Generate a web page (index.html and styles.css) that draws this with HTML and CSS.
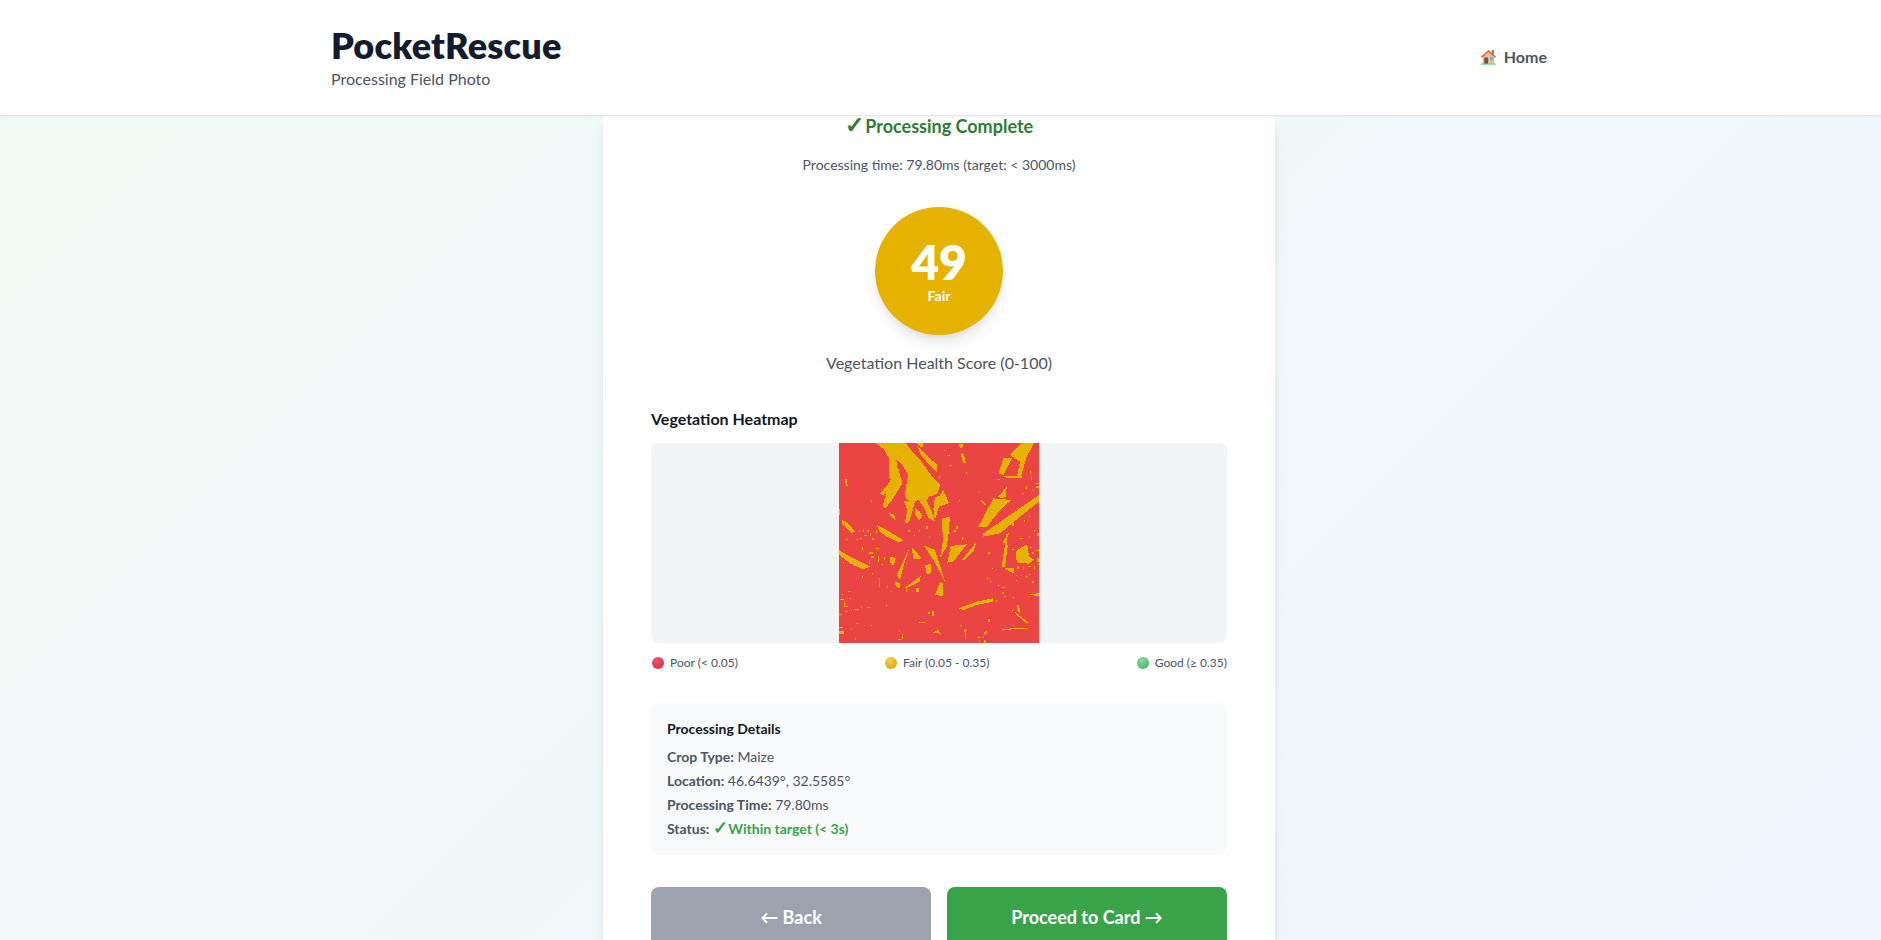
FILE: index.html
```html
<!DOCTYPE html>
<html lang="en">
<head>
<meta charset="utf-8">
<title>PocketRescue</title>
<link rel="stylesheet" href="styles.css">
</head>
<body>
<header class="site-header">
  <div class="header-inner">
    <div class="brand">
      <h1 class="brand-title">PocketRescue</h1>
      <p class="brand-sub">Processing Field Photo</p>
    </div>
    <a class="home-link" href="#">
      <svg class="home-icon" viewBox="0 0 16 16" aria-hidden="true">
        <rect x="11" y="2" width="2" height="4" fill="#a5633a"/>
        <path d="M2.5 7.5 8 3l5.5 4.5V15h-11z" fill="#e8c08e"/>
        <path d="M0.8 8.3 8 1.8l7.2 6.5-1 .9L8 3.8 1.8 9.2z" fill="#e2603a"/>
        <rect x="4" y="9" width="3.6" height="6" fill="#7a5240"/>
        <rect x="9.4" y="8.6" width="3" height="3" fill="#58b4ee"/>
        <rect x="0.8" y="14.6" width="14.4" height="1.1" fill="#5fdc6c"/>
      </svg>
      <span>Home</span>
    </a>
  </div>
</header>
<main class="page">
  <section class="card">
    <h2 class="done-title"><span class="tick">✓</span> Processing Complete</h2>
    <p class="done-time">Processing time: 79.80ms (target: &lt; 3000ms)</p>
    <div class="score-wrap">
      <div class="score-circle">
        <span class="score-value">49</span>
        <span class="score-label">Fair</span>
      </div>
    </div>
    <p class="score-caption">Vegetation Health Score (0-100)</p>
    <h3 class="map-title">Vegetation Heatmap</h3>
    <div class="map-frame">
      <svg class="map" viewBox="0 0 600 600" shape-rendering="crispEdges" aria-label="Vegetation heatmap">
        <rect width="600" height="600" fill="#ea4543"/>
        <g fill="#e6b200">
          <!-- upper left: the broad leaf and its fingers -->
          <polygon points="110,0 201,0 223,31 245,53 278,99 303,126 296,150 282,158 270,160 262,172 235,172 218,178 205,170 197,160 203,120 207,96 190,65 172,50 177,85 167,100 172,115 150,105 150,70 150,45 135,20"/>
          <polygon points="195,175 228,175 220,205 208,240 197,240 205,200"/>
          <polygon points="240,172 262,172 282,215 288,235 268,225 255,195"/>
          <polygon points="228,195 242,205 250,222 240,232 228,215"/>
          <polygon points="230,0 252,0 250,15"/>
          <polygon points="235,10 260,35 295,65 295,90 270,65 245,35"/>
          <polygon points="123,151 153,116 158,126 133,156"/>
          <polygon points="148,121 178,76 190,121 165,163 138,198 131,191"/>
          <polygon points="150,210 165,215 170,230 155,220"/>
          <polygon points="18,108 24,108 26,130 21,130"/>
          <polygon points="0,198 3,198 3,215 0,215"/>
          <polygon points="8,231 28,241 48,266 38,271 8,241"/>
          <polygon points="113,246 143,261 193,291 183,299 143,281 123,266"/>
          <polygon points="283,199 288,161 300,160 313,141 330,181 300,190 288,231"/>
          <!-- upper right -->
          <polygon points="513,36 548,0 586,0 563,41 546,101 535,96 543,56 520,41"/>
          <polygon points="478,91 493,46 518,46 493,96"/>
          <polygon points="495,100 550,100 550,106 505,106"/>
          <polygon points="360,5 372,0 370,15 362,15"/>
          <polygon points="365,30 375,35 380,60 372,60"/>
          <polygon points="478,161 503,131 501,161 488,166"/>
          <polygon points="418,251 463,166 518,171 493,191 463,226 443,253"/>
          <polygon points="433,271 513,216 600,156 600,176 543,221 483,271 433,281"/>
          <polygon points="505,275 510,270 500,300 490,300"/>
          <polygon points="308,226 333,221 328,280 323,311 303,346 312,290"/>
          <polygon points="425,170 440,185 438,188 425,175"/>
          <!-- lower left -->
          <polygon points="0,321 33,341 93,371 73,379 33,361 0,336"/>
          <polygon points="173,396 213,311 193,371 183,411"/>
          <polygon points="218,311 248,346 223,349"/>
          <polygon points="253,306 288,321 318,416 283,351"/>
          <polygon points="258,366 276,363 276,391 263,393"/>
          <polygon points="195,436 245,399 243,416 213,431"/>
          <polygon points="288,456 303,416 311,421 313,459"/>
          <polygon points="168,415 182,420 182,435 170,430"/>
          <polygon points="152,340 170,345 165,365 155,365"/>
          <!-- lower right -->
          <polygon points="335,309 383,304 343,356 325,359"/>
          <polygon points="368,351 413,296 403,326 378,351"/>
          <polygon points="488,371 503,271 506,311 498,371"/>
          <polygon points="530,325 548,312 565,305 570,340 585,350 570,362 540,360 530,350"/>
          <polygon points="495,375 525,375 525,390 510,385"/>
          <polygon points="358,496 413,476 463,466 463,476 413,486 373,501"/>
          <polygon points="570,455 600,450 600,460"/>
          <polygon points="535,485 540,485 545,515 535,505"/>
          <polygon points="525,505 570,540 565,543 532,515"/>
          <polygon points="478,563 495,557 568,555 568,558 500,560"/>
          <polygon points="375,558 383,560 380,590"/>
          <polygon points="432,570 447,562 440,575"/>
          <polygon points="280,570 298,560 305,572"/>
        </g>
        <path class="map-specks" d="M60 262h4v4h-4zM72 258h4v8h-4zM85 262h4v4h-4zM92 270h4v8h-4zM76 276h8v4h-8zM64 284h4v4h-4zM100 284h4v8h-4zM52 288h4v4h-4zM20 288h8v4h-8zM110 262h4v8h-4zM96 172h4v4h-4zM208 260h4v8h-4zM240 262h4v4h-4zM225 275h4v4h-4zM270 280h4v4h-4zM262 250h4v8h-4zM68 312h4v8h-4zM90 328h12v4h-12zM96 340h8v4h-8zM112 314h8v4h-8zM116 340h4v16h-4zM134 342h4v8h-4zM90 352h4v12h-4zM128 362h4v4h-4zM12 356h4v4h-4zM44 366h4v4h-4zM68 398h4v8h-4zM98 390h4v4h-4zM108 416h4v4h-4zM120 404h4v28h-4zM144 430h4v4h-4zM156 444h4v4h-4zM232 436h8v12h-8zM200 436h4v12h-4zM8 452h4v4h-4zM28 444h4v4h-4zM2 468h12v4h-12zM14 476h4v16h-4zM32 464h4v4h-4zM18 488h8v4h-8zM0 512h8v4h-8zM18 504h8v4h-8zM36 500h4v4h-4zM48 498h12v4h-12zM66 488h4v8h-4zM84 492h8v4h-8zM140 486h4v4h-4zM266 508h8v4h-8zM280 504h4v16h-4zM240 536h20v4h-20zM96 546h4v4h-4zM52 540h4v4h-4zM36 556h4v4h-4zM0 552h12v4h-12zM0 564h14v8h-14zM180 560h4v8h-4zM188 572h4v16h-4zM178 588h8v4h-8zM48 586h4v4h-4zM330 270h4v4h-4zM352 250h4v8h-4zM342 262h8v4h-8zM368 282h4v8h-4zM445 240h4v4h-4zM360 170h4v4h-4zM380 88h4v4h-4zM330 65h8v4h-8zM325 36h8v4h-8zM315 20h4v4h-4zM300 100h4v8h-4zM420 145h4v4h-4zM475 108h8v4h-8zM575 100h4v12h-4zM590 120h10v4h-10zM590 130h10v4h-10zM580 140h4v4h-4zM560 130h4v8h-4zM572 85h4v8h-4zM512 32h8v4h-8zM550 150h4v4h-4zM570 215h4v8h-4zM555 230h4v8h-4zM520 240h4v8h-4zM585 260h4v8h-4zM540 285h12v4h-12zM570 280h4v4h-4zM595 270h4v8h-4zM448 328h4v4h-4zM458 375h4v4h-4zM476 426h4v4h-4zM490 432h8v4h-8zM490 448h4v4h-4zM496 458h4v4h-4zM522 462h4v4h-4zM470 472h4v4h-4zM530 395h4v4h-4zM545 395h4v4h-4zM530 410h4v4h-4zM560 400h4v4h-4zM570 392h4v4h-4zM580 415h4v4h-4zM535 370h4v8h-4zM595 345h4v12h-4zM585 370h4v8h-4zM445 405h4v4h-4zM453 413h4v4h-4zM364 546h4v4h-4zM414 582h12v4h-12zM420 592h4v4h-4zM436 592h4v8h-4zM432 580h4v4h-4zM518 500h4v4h-4zM448 528h4v8h-4zM592 320h8v4h-8zM580 326h4v8h-4zM574 312h4v4h-4zM520 318h4v4h-4zM568 368h8v4h-8zM552 372h4v8h-4zM596 362h4v4h-4z"/>
      </svg>
    </div>
    <ul class="legend">
      <li class="legend-item"><span class="dot dot-poor"></span>Poor (&lt; 0.05)</li>
      <li class="legend-item"><span class="dot dot-fair"></span>Fair (0.05 - 0.35)</li>
      <li class="legend-item"><span class="dot dot-good"></span>Good (≥ 0.35)</li>
    </ul>
    <div class="details">
      <h4 class="details-title">Processing Details</h4>
      <p class="details-row"><strong>Crop Type:</strong> Maize</p>
      <p class="details-row"><strong>Location:</strong> 46.6439°, 32.5585°</p>
      <p class="details-row"><strong>Processing Time:</strong> 79.80ms</p>
      <p class="details-row"><strong>Status:</strong> <span class="ok"><span class="tick">✓</span> Within target (&lt; 3s)</span></p>
    </div>
    <div class="actions">
      <a class="btn btn-back" href="#">← Back</a>
      <a class="btn btn-next" href="#">Proceed to Card →</a>
    </div>
  </section>
</main>
</body>
</html>
```
FILE: styles.css
```css
* { box-sizing: border-box; }
html, body { margin: 0; height: 100%; }
body {
  height: 940px;
  overflow: hidden;
  display: flex;
  flex-direction: column;
  font-family: Lato, "Noto Sans", sans-serif;
  color: #4b5563;
  background: linear-gradient(135deg, #f0fbf5 0%, #eff6fe 100%);
}
.site-header {
  height: 116px;
  flex: none;
  padding-right: 3px;
  background: #fff;
  border-bottom: 1px solid #e5e7eb;
  box-shadow: 0 1px 2px rgba(0, 0, 0, .05);
  position: relative;
  z-index: 2;
}
.header-inner {
  max-width: 1280px;
  height: 100%;
  margin: 0 auto;
  padding: 0 32px 2px;
  display: flex;
  align-items: center;
  justify-content: space-between;
}
.brand-title {
  margin: 0;
  font-size: 36px;
  line-height: 40px;
  font-weight: 800;
  letter-spacing: .2px;
  color: #151b2e;
}
.brand-sub { margin: 4px 0 0; font-size: 16px; line-height: 20px; }
.home-link {
  display: flex;
  align-items: center;
  gap: 7px;
  font-size: 16px;
  font-weight: 700;
  color: #4b5563;
  text-decoration: none;
}
.home-icon { width: 17px; height: 17px; }
.page { flex: 1; min-height: 0; padding-right: 3px; display: flex; justify-content: center; }
.card {
  width: 672px;
  padding: 0 48px;
  background: #fff;
  box-shadow: 0 10px 15px -3px rgba(0, 0, 0, .1), 0 4px 6px -2px rgba(0, 0, 0, .05);
}
.done-title {
  margin: 0;
  height: 20px;
  font-size: 18px;
  line-height: 20px;
  font-weight: 700;
  text-align: center;
  color: #2e7d32;
}
.tick { font-size: 1.3em; line-height: 0; margin-right: -3px; }
.done-time {
  margin: 19px 0 0;
  font-size: 14px;
  line-height: 20px;
  text-align: center;
}
.score-wrap { margin-top: 32px; display: flex; justify-content: center; }
.score-circle {
  width: 128px;
  height: 128px;
  padding-top: 2px;
  border-radius: 50%;
  background: #e6b200;
  color: #fff;
  display: flex;
  flex-direction: column;
  align-items: center;
  justify-content: center;
  box-shadow: 0 10px 15px -3px rgba(0, 0, 0, .1), 0 4px 6px -2px rgba(0, 0, 0, .05);
}
.score-value { font-size: 48px; line-height: 48px; font-weight: 800; }
.score-label { font-size: 14px; line-height: 20px; font-weight: 700; }
.score-caption { margin: 16px 0 0; font-size: 16px; line-height: 24px; text-align: center; }
.map-title {
  margin: 32px 0 0;
  font-size: 16px;
  line-height: 24px;
  font-weight: 700;
  color: #111827;
}
.map-frame {
  margin-top: 12px;
  height: 200px;
  border-radius: 8px;
  overflow: hidden;
  background: #f3f4f6;
  display: flex;
  justify-content: center;
}
.map { width: 200px; height: 200px; display: block; }
.map-specks { fill: #e6b200; }
.legend {
  list-style: none;
  margin: 12px 0 0;
  padding: 0;
  display: flex;
  justify-content: space-between;
  font-size: 12px;
  line-height: 16px;
}
.legend-item { display: flex; align-items: center; gap: 6px; }
.dot { width: 12px; height: 12px; margin-left: 1px; border-radius: 50%; }
.dot-poor { background: radial-gradient(circle at 40% 30%, #f0556a, #cf2c48); }
.dot-fair { background: radial-gradient(circle at 40% 30%, #f7cf45, #d59c12); }
.dot-good { background: radial-gradient(circle at 40% 30%, #83e09a, #3da965); }
.details {
  margin-top: 32px;
  padding: 16px 16px 14px;
  background: #f9fafb;
  border-radius: 8px;
}
.details-title {
  margin: 0 0 6px;
  font-size: 14px;
  line-height: 20px;
  font-weight: 700;
  color: #111827;
}
.details-row { margin: 0; font-size: 14px; line-height: 24px; }
.details-row strong { font-weight: 700; }
.ok { color: #38a349; font-weight: 700; }
.actions { margin-top: 32px; display: grid; grid-template-columns: 1fr 1fr; gap: 16px; }
.btn {
  height: 60px;
  border-radius: 8px;
  display: flex;
  align-items: center;
  justify-content: center;
  font-size: 18px;
  font-weight: 700;
  color: #fff;
  text-decoration: none;
}
.btn-back { background: #9ca3af; }
.btn-next { background: #38a349; }
```
